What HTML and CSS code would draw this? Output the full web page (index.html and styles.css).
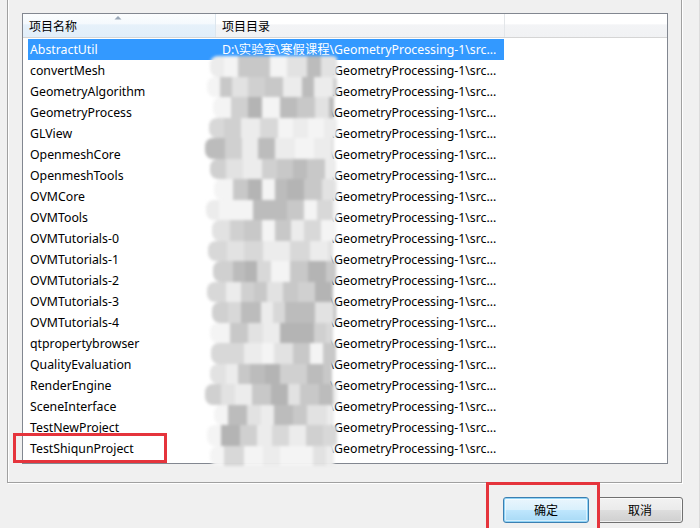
FILE: index.html
```html
<!DOCTYPE html>
<html lang="zh-CN">
<head>
    <meta charset="UTF-8">
    <title>选择项目</title>
    <link rel="stylesheet" href="styles.css">
</head>
<body>
    <div class="dialog">
        <div class="group">
            <div class="listview">
                <div class="list-header">
                    <div class="col-head col-name sorted">
                        项目名称
                        <svg class="sort-arrow" width="8" height="5" viewBox="0 0 8 5"><path d="M0.5 4.5 L4 1 L7.5 4.5 Z" fill="#9aa8b8"/></svg>
                    </div>
                    <div class="col-head col-dir">项目目录</div>
                    <div class="col-head col-rest"></div>
                </div>
                <div class="rows" id="rows">
                    <div class="row selected"><span class="c-name">AbstractUtil</span><span class="c-dir">D:\实验室\寒假课程\GeometryProcessing-1\src...</span></div>
                    <div class="row"><span class="c-name">convertMesh</span><span class="c-dir">D:\实验室\寒假课程\GeometryProcessing-1\src...</span></div>
                    <div class="row"><span class="c-name">GeometryAlgorithm</span><span class="c-dir">D:\实验室\寒假课程\GeometryProcessing-1\src...</span></div>
                    <div class="row"><span class="c-name">GeometryProcess</span><span class="c-dir">D:\实验室\寒假课程\GeometryProcessing-1\src...</span></div>
                    <div class="row"><span class="c-name">GLView</span><span class="c-dir">D:\实验室\寒假课程\GeometryProcessing-1\src...</span></div>
                    <div class="row"><span class="c-name">OpenmeshCore</span><span class="c-dir">D:\实验室\寒假课程\GeometryProcessing-1\src...</span></div>
                    <div class="row"><span class="c-name">OpenmeshTools</span><span class="c-dir">D:\实验室\寒假课程\GeometryProcessing-1\src...</span></div>
                    <div class="row"><span class="c-name">OVMCore</span><span class="c-dir">D:\实验室\寒假课程\GeometryProcessing-1\src...</span></div>
                    <div class="row"><span class="c-name">OVMTools</span><span class="c-dir">D:\实验室\寒假课程\GeometryProcessing-1\src...</span></div>
                    <div class="row"><span class="c-name">OVMTutorials-0</span><span class="c-dir">D:\实验室\寒假课程\GeometryProcessing-1\src...</span></div>
                    <div class="row"><span class="c-name">OVMTutorials-1</span><span class="c-dir">D:\实验室\寒假课程\GeometryProcessing-1\src...</span></div>
                    <div class="row"><span class="c-name">OVMTutorials-2</span><span class="c-dir">D:\实验室\寒假课程\GeometryProcessing-1\src...</span></div>
                    <div class="row"><span class="c-name">OVMTutorials-3</span><span class="c-dir">D:\实验室\寒假课程\GeometryProcessing-1\src...</span></div>
                    <div class="row"><span class="c-name">OVMTutorials-4</span><span class="c-dir">D:\实验室\寒假课程\GeometryProcessing-1\src...</span></div>
                    <div class="row"><span class="c-name">qtpropertybrowser</span><span class="c-dir">D:\实验室\寒假课程\GeometryProcessing-1\src...</span></div>
                    <div class="row"><span class="c-name">QualityEvaluation</span><span class="c-dir">D:\实验室\寒假课程\GeometryProcessing-1\src...</span></div>
                    <div class="row"><span class="c-name">RenderEngine</span><span class="c-dir">D:\实验室\寒假课程\GeometryProcessing-1\src...</span></div>
                    <div class="row"><span class="c-name">SceneInterface</span><span class="c-dir">D:\实验室\寒假课程\GeometryProcessing-1\src...</span></div>
                    <div class="row"><span class="c-name">TestNewProject</span><span class="c-dir">D:\实验室\寒假课程\GeometryProcessing-1\src...</span></div>
                    <div class="row"><span class="c-name">TestShiqunProject</span><span class="c-dir">D:\实验室\寒假课程\GeometryProcessing-1\src...</span></div>
                </div>
            </div>
        </div>

        <div class="button-bar">
            <button class="btn btn-default">确定</button>
            <button class="btn">取消</button>
        </div>

        <!-- blurred-out paths -->
        <div class="mosaic" id="mosaic"></div>

        <!-- red annotation boxes -->
        <div class="mark mark-row"></div>
        <div class="mark mark-ok"></div>
    </div>

    <script src="script.js"></script>
</body>
</html>
```

FILE: styles.css
```css
* {
    margin: 0;
    padding: 0;
    box-sizing: border-box;
}

body {
    width: 700px;
    height: 528px;
    overflow: hidden;
    background: #f0f0f0;
    font-family: 'Noto Sans', 'Noto Sans CJK SC', sans-serif;
    font-size: 12px;
    color: #000;
}

.dialog {
    position: relative;
    display: flex;
    flex-direction: column;
    width: 700px;
    height: 528px;
    border-right: 1px solid #dcdcdc;
}

.group {
    margin: -10px 0 0 7px;
    width: 675px;
    height: 493px;
    flex-shrink: 0;
    border: 1px solid #a0a0a0;
    box-shadow: inset 1px 1px 0 #fff, 1px 1px 0 #fff;
    padding: 22px 0 0 14px;
}

.listview {
    width: 646px;
    height: 451px;
    border: 1px solid #828790;
    background: #fff;
    overflow: hidden;
}

.list-header {
    display: flex;
    height: 24px;
    border-bottom: 1px solid #d5d5d5;
    background: linear-gradient(#ffffff 0%, #ffffff 45%, #f3f4f6 46%, #f1f2f4 100%);
}

.col-head {
    position: relative;
    height: 23px;
    line-height: 25px;
    padding-left: 6px;
    border-right: 1px solid #e3e6e9;
}

.col-name {
    width: 193px;
}

.col-name.sorted {
    background: linear-gradient(#fbfdfe 0%, #f4f9fd 45%, #e6f1fa 46%, #e2eef9 100%);
    border-right-color: #dde6ee;
}

.sort-arrow {
    position: absolute;
    left: 91px;
    top: 1px;
}

.col-dir {
    width: 289px;
}

.col-rest {
    flex: 1;
    border-right: none;
}

.rows {
    padding: 1px 0 0 5px;
    font-size: 12.3px;
}

.row {
    display: flex;
    width: 476px;
    height: 21px;
    line-height: 21px;
    white-space: nowrap;
}

.row.selected {
    background: #3399ff;
    color: #fff;
}

.c-name {
    width: 194px;
    padding-left: 2px;
    overflow: hidden;
}

.c-dir {
    overflow: hidden;
}

.button-bar {
    display: flex;
    gap: 8px;
    padding: 14px 0 0 503px;
}

.btn {
    width: 86px;
    height: 26px;
    font-family: inherit;
    font-size: 12px;
    color: #000;
    border: 1px solid #707070;
    border-radius: 3px;
    background: linear-gradient(#f2f2f2 0%, #ebebeb 48%, #dddddd 52%, #cfcfcf 100%);
    box-shadow: inset 0 0 0 1px rgba(255, 255, 255, 0.7);
}

.btn-default {
    border-color: #3c7fb1;
    background: linear-gradient(#eaf6fd 0%, #d9f0fc 48%, #bee6fd 52%, #a7d9f5 100%);
    box-shadow: inset 0 0 0 1px #8fd3f6, inset 0 0 0 2px rgba(255, 255, 255, 0.5);
}

.mosaic {
    position: absolute;
    left: 204px;
    top: 56px;
    width: 136px;
    height: 410px;
    display: flex;
    flex-direction: column;
    filter: blur(1.5px);
}

.mosaic-row {
    display: flex;
    height: 21px;
    border-radius: 8px;
    overflow: hidden;
}

.mosaic-cell {
    height: 21px;
}

.mark {
    position: absolute;
    border: 3px solid #e5343c;
}

.mark-row {
    left: 13px;
    top: 433px;
    width: 154px;
    height: 30px;
}

.mark-ok {
    left: 486px;
    top: 482px;
    width: 114px;
    height: 52px;
}
```

FILE: script.js
```js
// pixelated smudge over the directory column
var mosaic = document.getElementById('mosaic');
var tones = ['#ececec', '#d8d8d8', '#c8c8c8', '#bcbcbc', '#e2e2e2', '#d0d0d0', '#f4f4f4', '#b4b4b4'];
var seed = 11;

function rand() {
    seed = (seed * 9301 + 49297) % 233280;
    return seed / 233280;
}

for (var r = 0; r < 20; r++) {
    var row = document.createElement('div');
    row.className = 'mosaic-row';
    var left = Math.round(rand() * 10);
    var right = 128 + Math.round(rand() * 6);
    row.style.marginLeft = left + 'px';
    var width = right - left;
    var x = 0;
    while (x < width) {
        var w = Math.min(12 + Math.round(rand() * 8), width - x);
        var cell = document.createElement('div');
        cell.className = 'mosaic-cell';
        cell.style.width = w + 'px';
        cell.style.background = tones[Math.floor(rand() * tones.length)];
        row.appendChild(cell);
        x += w;
    }
    mosaic.appendChild(row);
}
```
